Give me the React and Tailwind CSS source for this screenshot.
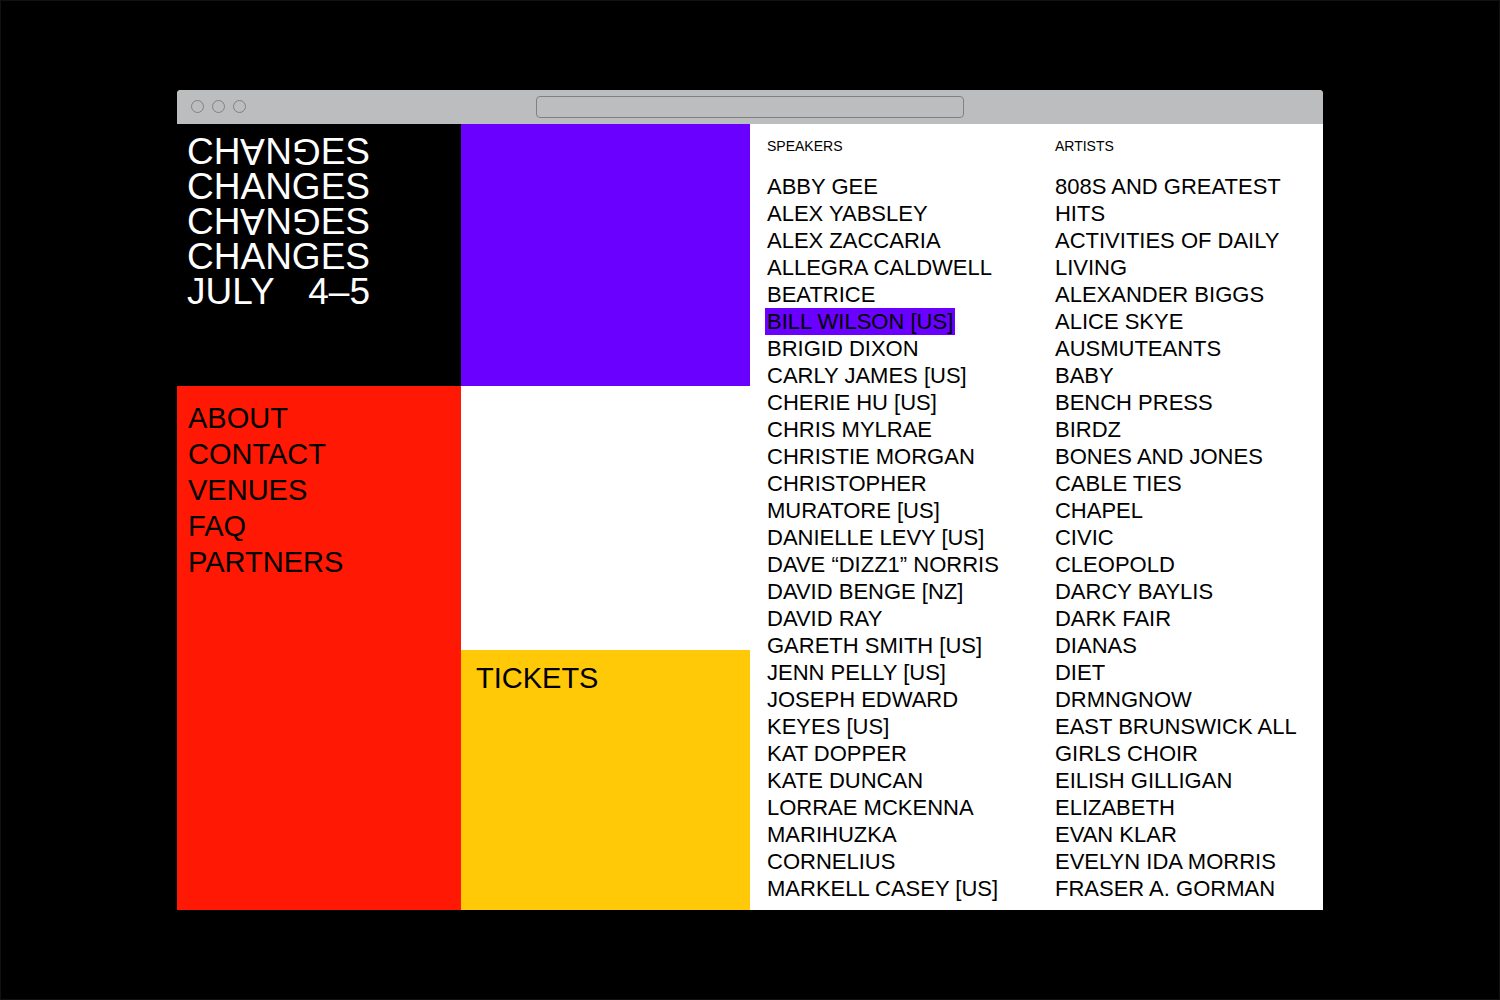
const speakers = [
  'ABBY GEE',
  'ALEX YABSLEY',
  'ALEX ZACCARIA',
  'ALLEGRA CALDWELL',
  'BEATRICE',
  'BILL WILSON [US]',
  'BRIGID DIXON',
  'CARLY JAMES [US]',
  'CHERIE HU [US]',
  'CHRIS MYLRAE',
  'CHRISTIE MORGAN',
  'CHRISTOPHER MURATORE [US]',
  'DANIELLE LEVY [US]',
  'DAVE “DIZZ1” NORRIS',
  'DAVID BENGE [NZ]',
  'DAVID RAY',
  'GARETH SMITH [US]',
  'JENN PELLY [US]',
  'JOSEPH EDWARD KEYES [US]',
  'KAT DOPPER',
  'KATE DUNCAN',
  'LORRAE MCKENNA',
  'MARIHUZKA CORNELIUS',
  'MARKELL CASEY [US]',
];

const artists = [
  '808S AND GREATEST HITS',
  'ACTIVITIES OF DAILY LIVING',
  'ALEXANDER BIGGS',
  'ALICE SKYE',
  'AUSMUTEANTS',
  'BABY',
  'BENCH PRESS',
  'BIRDZ',
  'BONES AND JONES',
  'CABLE TIES',
  'CHAPEL',
  'CIVIC',
  'CLEOPOLD',
  'DARCY BAYLIS',
  'DARK FAIR',
  'DIANAS',
  'DIET',
  'DRMNGNOW',
  'EAST BRUNSWICK ALL GIRLS CHOIR',
  'EILISH GILLIGAN',
  'ELIZABETH',
  'EVAN KLAR',
  'EVELYN IDA MORRIS',
  'FRASER A. GORMAN',
];

const navItems = ['ABOUT', 'CONTACT', 'VENUES', 'FAQ', 'PARTNERS'];

function TitleBar() {
  return (
    <header className="grid h-[34px] grid-cols-[359fr_428fr_359fr] items-center bg-[#bcbdbf]">
      <div className="flex gap-2 pb-0.5 pl-3.5">
        {['Close', 'Minimise', 'Zoom'].map((label) => (
          <button key={label} type="button" aria-label={label} className="size-[13px] rounded-full border border-[#808184]" />
        ))}
      </div>
      <input
        type="text"
        aria-label="Address"
        className="h-[22px] w-full rounded border border-[#808184] bg-transparent px-2 text-sm outline-none"
      />
    </header>
  );
}

function Turned({ children }) {
  return <span className="inline-block rotate-180 pt-px leading-8">{children}</span>;
}

function TurnedWord() {
  return (
    <span className="block">
      CH<Turned>A</Turned>N<Turned>G</Turned>ES
    </span>
  );
}

function Logo() {
  return (
    <h1 className="w-fit text-[37px] leading-[35px] text-white">
      <TurnedWord />
      <span className="block">CHANGES</span>
      <TurnedWord />
      <span className="block">CHANGES</span>
      <span className="flex justify-between">
        <span>JULY</span>
        <span>4–5</span>
      </span>
    </h1>
  );
}

function NameList({ title, names, selected }) {
  return (
    <section className="pt-[11px] pr-5 pb-2 pl-[17px]">
      <h2 className="mb-4 text-sm leading-[22px]">{title}</h2>
      <ul className="text-[22px] leading-[27px]">
        {names.map((name) => (
          <li key={name}>
            <a href="#" className={name === selected ? '-mx-0.5 block w-fit bg-[#6a00ff] px-0.5' : 'block'}>
              {name}
            </a>
          </li>
        ))}
      </ul>
    </section>
  );
}

export default function App() {
  return (
    <div className="flex min-h-screen items-center justify-center border border-[#111111] bg-black font-['Liberation_Sans',Arial,sans-serif] text-black">
      <div className="w-[76.5%] overflow-hidden rounded-t bg-white">
        <TitleBar />
        <main className="grid grid-cols-[284fr_289fr_288fr_285fr]">
          <div className="flex flex-col">
            <div className="min-h-[262px] bg-black px-2.5 pt-2.5">
              <Logo />
            </div>
            <nav className="grow bg-[#ff1803] px-[11px] pt-3.5">
              <ul className="text-[29px] leading-[36px]">
                {navItems.map((item) => (
                  <li key={item}>
                    <a href="#">{item}</a>
                  </li>
                ))}
              </ul>
            </nav>
          </div>
          <div className="grid grid-rows-[262fr_264fr_260fr]">
            <div className="bg-[#6a00ff]" />
            <div className="bg-white" />
            <a href="#" className="bg-[#ffc907] px-[15px] pt-2.5 text-[29px] leading-[36px]">
              TICKETS
            </a>
          </div>
          <NameList title="SPEAKERS" names={speakers} selected="BILL WILSON [US]" />
          <NameList title="ARTISTS" names={artists} />
        </main>
      </div>
    </div>
  );
}
